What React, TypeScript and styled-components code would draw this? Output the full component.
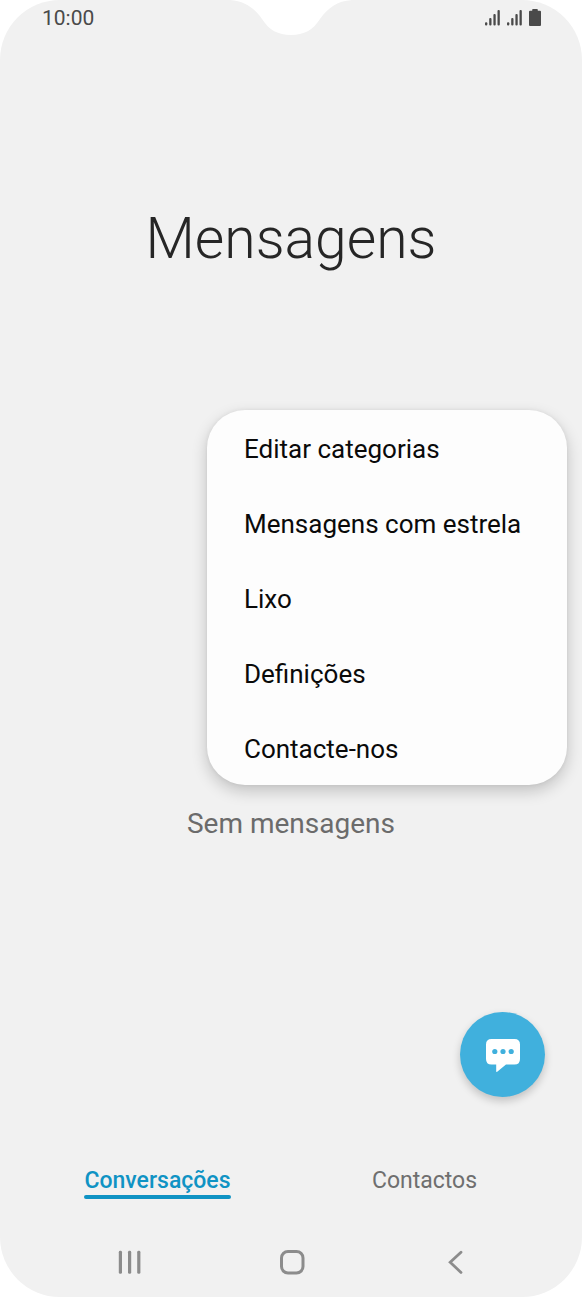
import React from "react";
import styled, { createGlobalStyle } from "styled-components";

const GlobalStyle = createGlobalStyle`
  *, *::before, *::after { box-sizing: border-box; }
  body { margin: 0; background: #fff; font-family: Roboto, "Liberation Sans", sans-serif; }
  button { border: 0; padding: 0; background: none; font: inherit; color: inherit; cursor: pointer; }
`;

const Phone = styled.div`
  position: relative;
  display: flex;
  flex-direction: column;
  min-height: 100vh;
  border-radius: 60px;
  background: #f1f1f1;
  overflow: hidden;
`;

const StatusBar = styled.header`
  display: flex;
  justify-content: space-between;
  align-items: center;
  height: 36px;
  padding: 0 41px 0 42px;
  color: #4a4a4a;
`;

const Clock = styled.time`
  font-size: 21px;
  line-height: 36px;
`;

const StatusIcons = styled.div`
  display: flex;
  align-items: center;
  gap: 7px;
  svg { display: block; }
`;

const Notch = styled.svg`
  position: absolute;
  top: 0;
  left: 50%;
  transform: translateX(-50%);
`;

const Hero = styled.div`
  display: flex;
  align-items: center;
  justify-content: center;
  height: 406px;
`;

const Title = styled.h1`
  margin: 0;
  font-size: 57px;
  line-height: 68px;
  font-weight: 300;
  color: #262626;
`;

const Content = styled.main`
  position: relative;
  flex: 1;
  display: flex;
  flex-direction: column;
  align-items: center;
  justify-content: center;
  padding-top: 58px;
`;

const Empty = styled.p`
  margin: 0;
  font-size: 28px;
  line-height: 36px;
  color: #6b6b6b;
`;

const Menu = styled.div`
  position: absolute;
  top: 410px;
  right: 15px;
  width: 360px;
  display: flex;
  flex-direction: column;
  border-radius: 38px;
  background: #fdfdfd;
  box-shadow: 0 6px 16px rgba(0, 0, 0, 0.2), 0 0 4px rgba(0, 0, 0, 0.06);
  overflow: hidden;
`;

const MenuItem = styled.button`
  height: 75px;
  padding: 2px 37px 0;
  text-align: left;
  font-size: 26px;
  line-height: 32px;
  color: #0a0a0a;
`;

const ComposeButton = styled.button`
  position: absolute;
  right: 37px;
  bottom: 50px;
  display: flex;
  align-items: center;
  justify-content: center;
  width: 85px;
  height: 85px;
  border-radius: 50%;
  background: #40b0dd;
  box-shadow: 0 4px 8px rgba(0, 0, 0, 0.2);
`;

const Tabs = styled.div`
  display: flex;
  height: 80px;
  padding: 0 24px;
`;

const Tab = styled.button<{ $active?: boolean }>`
  flex: 1;
  display: flex;
  justify-content: center;
  align-items: flex-start;
  padding-top: 20px;
  font-size: 23px;
  line-height: 28px;
  font-weight: ${(p) => (p.$active ? 500 : 400)};
  color: ${(p) => (p.$active ? "#0f93c4" : "#6f6f6f")};
`;

const TabLabel = styled.span`
  display: flex;
  flex-direction: column;
  &[data-active="true"]::after {
    content: "";
    height: 4px;
    border-radius: 2px;
    background: #0f93c4;
  }
`;

const NavBar = styled.nav`
  display: flex;
  height: 70px;
  padding: 0 46px 0 48px;
`;

const NavButton = styled.button`
  flex: 1;
  display: flex;
  align-items: center;
  justify-content: center;
  color: #8c8c8c;
`;

const Signal = () => (
  <svg width="15" height="16" viewBox="0 0 15 16" fill="currentColor" aria-hidden="true">
    <rect x="0" y="12.2" width="2.3" height="3.4" rx="1" />
    <rect x="4.2" y="8" width="2.3" height="7.6" rx="1" />
    <rect x="8.4" y="4.1" width="2.3" height="11.5" rx="1" />
    <rect x="12.5" y="0" width="2.3" height="15.6" rx="1" />
  </svg>
);

const Battery = () => (
  <svg width="12" height="18" viewBox="0 0 12 18" fill="currentColor" aria-hidden="true">
    <path d="M3.2 1.8V0.8Q3.2 0 4 0H8Q8.8 0 8.8 0.8V1.8H11Q12 1.8 12 2.8V16Q12 17 11 17H1Q0 17 0 16V2.8Q0 1.8 1 1.8Z" />
  </svg>
);

const items = ["Editar categorias", "Mensagens com estrela", "Lixo", "Definições", "Contacte-nos"];

export default function App() {
  return (
    <>
      <GlobalStyle />
      <Phone>
        <Notch width="130" height="36" viewBox="0 0 130 36" fill="#fff" aria-hidden="true">
          <path d="M4 0C19 1 28 8 36 19C43 30 52 35 65 35C78 35 87 30 94 19C102 8 111 1 126 0Z" />
        </Notch>
        <StatusBar>
          <Clock>10:00</Clock>
          <StatusIcons>
            <Signal />
            <Signal />
            <Battery />
          </StatusIcons>
        </StatusBar>
        <Hero>
          <Title>Mensagens</Title>
        </Hero>
        <Content>
          <Empty>Sem mensagens</Empty>
          <ComposeButton aria-label="Nova mensagem">
            <svg width="34" height="34" viewBox="0 0 34 34" aria-hidden="true">
              <path
                fill="#fff"
                d="M5.5 1H28.5Q34 1 34 6.5V21Q34 26.5 28.5 26.5H20L11.2 33.8Q10.2 34.4 10.2 33.2V26.5H5.5Q0 26.5 0 21V6.5Q0 1 5.5 1Z"
              />
              <g fill="#40b0dd">
                <circle cx="8.8" cy="13.5" r="2.6" />
                <circle cx="17" cy="13.5" r="2.6" />
                <circle cx="25.2" cy="13.5" r="2.6" />
              </g>
            </svg>
          </ComposeButton>
        </Content>
        <Tabs>
          <Tab $active>
            <TabLabel data-active="true">Conversações</TabLabel>
          </Tab>
          <Tab>
            <TabLabel>Contactos</TabLabel>
          </Tab>
        </Tabs>
        <NavBar>
          <NavButton aria-label="Recentes">
            <svg width="24" height="24" viewBox="0 0 24 24" fill="currentColor" aria-hidden="true">
              <rect x="1.8" y="0.8" width="3.2" height="23" rx="1.4" />
              <rect x="11" y="0.8" width="3.2" height="23" rx="1.4" />
              <rect x="20.2" y="0.8" width="3.2" height="23" rx="1.4" />
            </svg>
          </NavButton>
          <NavButton aria-label="Início">
            <svg width="26" height="26" viewBox="0 0 26 26" fill="none" stroke="currentColor" strokeWidth="3" aria-hidden="true">
              <rect x="2.5" y="2.5" width="21.5" height="21.5" rx="6.5" />
            </svg>
          </NavButton>
          <NavButton aria-label="Voltar">
            <svg
              width="16"
              height="24"
              viewBox="0 0 16 24"
              fill="none"
              stroke="currentColor"
              strokeWidth="2.8"
              strokeLinecap="round"
              aria-hidden="true"
            >
              <path d="M14 2.2L3.2 12.3L14 22.4" />
            </svg>
          </NavButton>
        </NavBar>
        <Menu role="menu">
          {items.map((label) => (
            <MenuItem key={label} role="menuitem">
              {label}
            </MenuItem>
          ))}
        </Menu>
      </Phone>
    </>
  );
}
